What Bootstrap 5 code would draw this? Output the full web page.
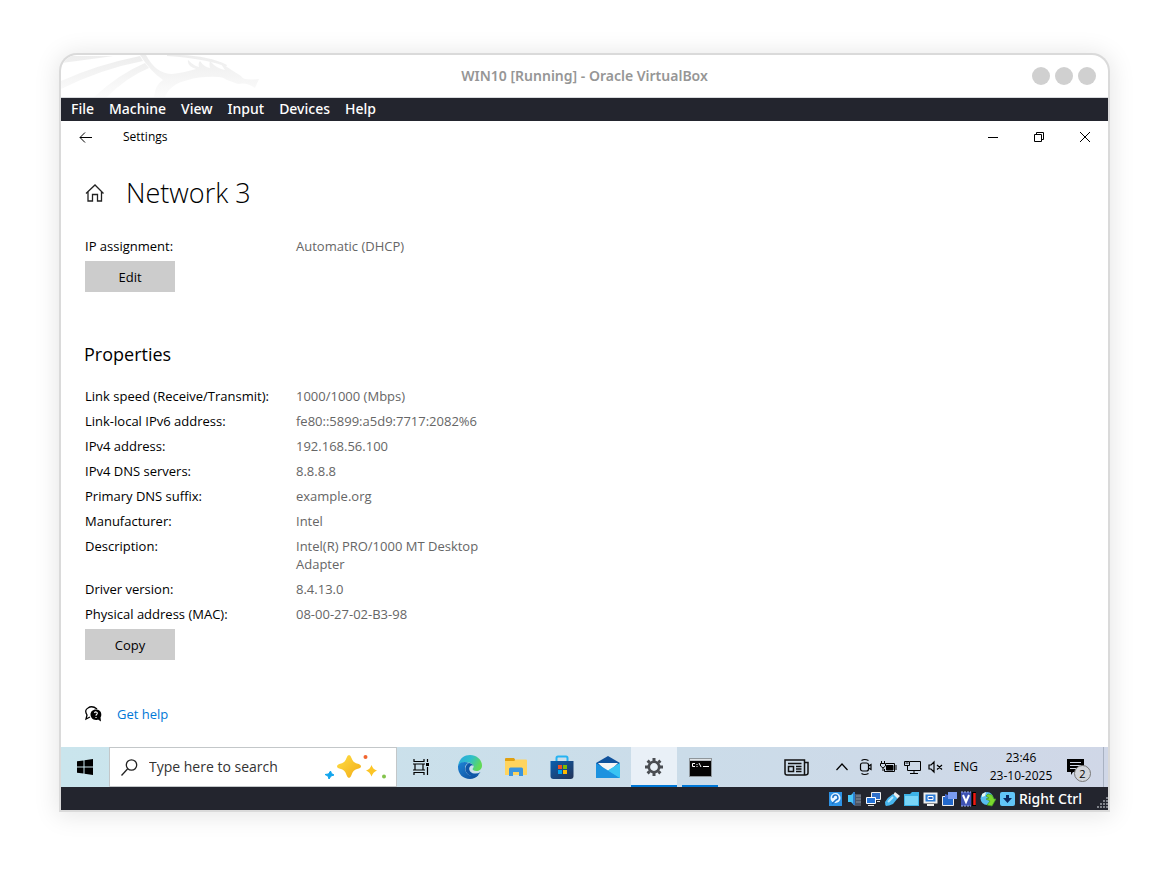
<!DOCTYPE html>
<html lang="en">
<head>
<meta charset="utf-8">
<meta name="viewport" content="width=device-width, initial-scale=1">
<title>WIN10 [Running] - Oracle VirtualBox</title>
<link href="https://cdn.jsdelivr.net/npm/bootstrap@5.3.0/dist/css/bootstrap.min.css" rel="stylesheet">
<style>
  body { background: #fff; color: #000; font: 13px/18px "Open Sans", "Noto Sans", sans-serif; padding: 55px 61px 64px; }
  svg { display: block; flex: none; }
  button { border: 0; background: none; padding: 0; color: inherit; }
  .vm { border-radius: 16px 16px 0 0; box-shadow: 0 0 0 2px #dadada, 0 2px 24px 4px rgba(0,0,0,.1); }
  .vm-title { height: 43px; border-bottom: 1px solid #d8dadd; border-radius: 16px 16px 0 0; overflow: hidden;
    display: grid; grid-template-columns: 1fr auto 1fr; align-items: center; font: 600 14px/20px "Noto Sans", sans-serif; color: #969696; }
  .dots { gap: 5px; padding-right: 12px; }
  .dot { width: 18px; height: 18px; border-radius: 50%; background: #d0d0d0; }
  .vm-bar { background: #23252e; color: #fff; height: 23px; font: 500 14px/22px "Noto Sans", sans-serif; }
  .vm-menu { gap: 15px; padding-left: 10px; }
  .vm-menu a { color: #fff; text-decoration: none; }
  .vm-status { gap: 4px; }
  .key { padding-right: 10px; line-height: 24px; }
  .app-bar { height: 32px; font-size: 12px; line-height: 20px; }
  .win-btn { width: 46px; height: 32px; display: flex; align-items: center; justify-content: center; }
  .back-btn { width: 48px; height: 32px; display: flex; align-items: center; justify-content: center; margin-right: 14px; }
  .page-area { padding: 20px 24px 23px; }
  .page-title { font: 300 27px/38px "Open Sans", sans-serif; margin: 0; }
  .page-head { height: 40px; gap: 22px; }
  .sub-title { font: 400 18px/28px "Open Sans", sans-serif; margin: 48px 0 19px -1px; }
  .props { display: grid; gap: 7px; margin-bottom: 6px; }
  .prop { display: grid; grid-template-columns: 211px 200px; }
  .prop dt { font-weight: 400; }
  .prop dd { margin: 0; color: #666; }
  .btn-flat { width: 90px; height: 31px; background: #ccc; border-radius: 0; display: block; }
  .help { color: #0078d7; text-decoration: none; }
  .help-row { margin-top: 44px; gap: 15px; height: 20px; }
  .task { height: 40px; background: linear-gradient(90deg, #cae5ed, #cbdce9 60%, #d0d7e7); }
  .start-btn { width: 48px; display: flex; align-items: center; justify-content: center; }
  .search { width: 288px; border: 1px solid #c3c7c9; background: #fff; padding: 0 9px 0 11px; }
  .search input { border: 0; outline: 0; width: 150px; font-size: 14px; background: none; padding: 0; margin-left: 11px; }
  .search input::placeholder { color: #333; opacity: 1; }
  .t-btn { width: 46px; height: 40px; display: flex; align-items: center; justify-content: center; }
  .t-view { margin: 0 3px 0 1px; }
  .t-active { background: #e9f0f7; box-shadow: inset 0 -2px #0078d7; }
  .t-open { width: 36px; margin: 0 5px; box-shadow: inset 0 -2px #0078d7; }
  .tray { gap: 7px; font-size: 12px; }
  .clock { text-align: center; width: 64px; }
  .notes { width: 40px; height: 40px; position: relative; border-right: 1px solid #a9b2c2; margin-right: 4px; }
  .notes svg { margin: 1px 0 0 3px; }
  .count { position: absolute; left: 10px; top: 18px; width: 17px; height: 17px; border: 1px solid #777; border-radius: 50%; background: #d3d6dc; font-size: 11px; line-height: 15px; text-align: center; }
</style>
</head>
<body>
<main class="vm">
  <header class="vm-title">
    <svg width="200" height="42" viewBox="0 0 200 42" aria-hidden="true">
      <defs><linearGradient id="wing" x1="0" y1="0" x2="0" y2="42" gradientUnits="userSpaceOnUse"><stop stop-color="#ededed"/><stop offset="1" stop-color="#fcfcfc"/></linearGradient></defs>
      <g fill="url(#wing)">
        <path d="M0 1H52Q24 5 0 8Z M0 26Q35 10 79 1L82 6Q40 14 0 34Z M33 42Q58 19 84 8L88 13Q66 22 46 42Z"/>
        <path d="M79 0H85Q95 19 111 19Q122 18 135 14Q126 11 127 5Q133 11 138 12Q137 8 139 6Q143 12 149 13Q148 9 149 6Q156 14 164 15L160 9L166 12Q172 16 180 21Q182 26 198 24L194 33Q186 27 177 29L166 25Q162 22 158 22Q140 21 127 25Q109 29 104 42H93Q94 30 102 25Q90 17 79 0Z"/>
        <path d="M106 0Q145 -1 166 10L165 12Q148 4 106 1Z"/>
      </g>
    </svg>
    <span>WIN10 [Running] - Oracle VirtualBox</span>
    <div class="dots d-flex justify-content-end">
      <button class="dot" aria-label="Minimize VM"></button><button class="dot" aria-label="Maximize VM"></button><button class="dot" aria-label="Close VM"></button>
    </div>
  </header>
  <nav class="vm-bar vm-menu d-flex" aria-label="Menu">
    <a href="#">File</a><a href="#">Machine</a><a href="#">View</a><a href="#">Input</a><a href="#">Devices</a><a href="#">Help</a>
  </nav>

  <section class="bg-white">
    <div class="app-bar d-flex align-items-center">
      <button class="back-btn" aria-label="Back"><svg width="13" height="11" fill="none" stroke="#000"><path d="M13 5.500H1M6 .5L1 5.500L6 10.500"/></svg></button>
      <span class="me-auto">Settings</span>
      <button class="win-btn" aria-label="Minimize"><svg width="10" height="10" stroke="#000"><path d="M0 5.500H10"/></svg></button>
      <button class="win-btn" aria-label="Restore"><svg width="10" height="10" fill="none" stroke="#000"><path d="M.5 2.500H7.500V9.500H.5ZM2.500 2.500V.5H9.500V7.500H7.500"/></svg></button>
      <button class="win-btn" aria-label="Close"><svg width="10" height="10" stroke="#000"><path d="M0 0L10 10M10 0L0 10"/></svg></button>
    </div>

    <div class="page-area">
      <div class="page-head d-flex align-items-center mb-4">
        <svg width="19" height="18" fill="none" stroke="#222" stroke-width="1.300" viewBox="0 0 19 18"><path d="M1 9.500L10 1L18.500 9.500M3 8V17H7.500V10.500H12.500V17H16.500V8"/></svg>
        <h1 class="page-title">Network 3</h1>
      </div>
      <dl class="props"><div class="prop"><dt>IP assignment:</dt><dd>Automatic (DHCP)</dd></div></dl>
      <button class="btn-flat">Edit</button>

      <h2 class="sub-title">Properties</h2>
      <dl class="props">
        <div class="prop"><dt>Link speed (Receive/Transmit):</dt><dd>1000/1000 (Mbps)</dd></div>
        <div class="prop"><dt>Link-local IPv6 address:</dt><dd>fe80::5899:a5d9:7717:2082%6</dd></div>
        <div class="prop"><dt>IPv4 address:</dt><dd>192.168.56.100</dd></div>
        <div class="prop"><dt>IPv4 DNS servers:</dt><dd>8.8.8.8</dd></div>
        <div class="prop"><dt>Primary DNS suffix:</dt><dd>example.org</dd></div>
        <div class="prop"><dt>Manufacturer:</dt><dd>Intel</dd></div>
        <div class="prop"><dt>Description:</dt><dd>Intel(R) PRO/1000 MT Desktop Adapter</dd></div>
        <div class="prop"><dt>Driver version:</dt><dd>8.4.13.0</dd></div>
        <div class="prop"><dt>Physical address (MAC):</dt><dd>08-00-27-02-B3-98</dd></div>
      </dl>
      <button class="btn-flat">Copy</button>
      <div class="help-row d-flex align-items-center">
        <svg width="17" height="16" viewBox="0 0 17 16"><path d="M5 11L1 13L2 9Q-1 4 3 2Q7 -1 12 3" fill="none" stroke="#000" stroke-width="1.300"/><path d="M11 3.500C7.500 3.500 5.500 6 5.500 8.500S7.500 14 11 14Q12 14 13 13.500L16 15.500L15.500 11.500Q16.500 10 16.300 8C16 5 14 3.500 11 3.500Z"/><path d="M9.500 7Q10 5.800 11.200 6Q12.800 6.500 12 8Q11 8.500 11 9.700M11 11V12" fill="none" stroke="#fff" stroke-width="1.200"/></svg>
        <a class="help" href="#">Get help</a>
      </div>
    </div>
  </section>

  <footer>
    <div class="task d-flex">
      <button class="start-btn" aria-label="Start"><svg width="16" height="16"><path d="M0 2.300L6.500 1.400V7.500H0ZM7.500 1.200L16 0V7.500H7.500ZM0 8.500H6.500V14.600L0 13.700ZM7.500 8.500H16V16L7.500 14.800Z"/></svg></button>
      <label class="search d-flex align-items-center">
        <svg width="17" height="17" fill="none" stroke="#222" stroke-width="1.300"><circle cx="10.500" cy="6" r="5.200"/><path d="M6.500 10L.5 16.500"/></svg>
        <input type="text" placeholder="Type here to search" aria-label="Search">
        <svg class="ms-auto" width="62" height="26" viewBox="0 0 62 26">
          <defs><linearGradient id="gold" x1="0" y1="0" x2="1" y2="1"><stop stop-color="#ffdf45"/><stop offset="1" stop-color="#f2ab16"/></linearGradient></defs>
          <path d="M24 1Q25.500 1 26.500 4Q28 8.500 32 9.500Q36 10.500 36 12.500Q36 14 32 15Q28 16 26.500 21Q25.500 24 24 24Q22.500 24 21.500 21Q20 16 16 15Q12 14 12 12.500Q12 10.500 16 9.500Q20 8.500 21.500 4Q22.500 1 24 1Z" fill="url(#gold)"/>
          <path d="M46.500 11Q48 15.500 52 16.500Q48 18 46.500 22.500Q45 18 41 16.500Q45 15.500 46.500 11Z" fill="#fcc526"/>
          <path d="M5.500 17L6.500 19.500L9 21L6 22L4 25L3 22L0 20.500L3.500 20Z" fill="#12a5ed" stroke="#12a5ed" stroke-width="1" stroke-linejoin="round"/>
          <circle cx="40.500" cy="3" r="2" fill="#f1652f"/><circle cx="59" cy="22.500" r="2" fill="#83c34b"/>
        </svg>
      </label>
      <button class="t-btn t-view" aria-label="Task view"><svg width="17" height="16" viewBox="0 0 17 16" fill="none" stroke="#000" stroke-width="1.200"><path d="M1 0V2.500H11V0M1 16V13.500H11V16M2 5H10V11H2ZM0 5H12M0 11H12M14.500 0V3M14.500 8V16"/><path d="M13 4H16V7H13Z" fill="#000" stroke="none"/></svg></button>
      <button class="t-btn" aria-label="Edge"><svg width="24" height="24" viewBox="0 0 24 24">
        <defs><linearGradient id="eg" x1="0" y1="0" x2="1" y2=".4"><stop stop-color="#29a6e0"/><stop offset=".55" stop-color="#30bfc9"/><stop offset="1" stop-color="#61d957"/></linearGradient><linearGradient id="eb" x1="0" y1="0" x2="1" y2="1"><stop stop-color="#1d84d6"/><stop offset="1" stop-color="#0c4a97"/></linearGradient></defs>
        <path d="M0 11C1 4 6 0 12 0C19 0 24 5 24 10.500C24 14.500 21 16 18.500 16C15.500 16 14.500 14.700 14.500 14Q16 12.500 15.500 10.500C14 7 4 5 0 11Z" fill="url(#eg)"/>
        <path d="M0 11C2 6.500 7 6 11 8C7 9 6 13 8 17C10 21 15 22 21 19.500C18 23 15 24 12 24C5 24 0 19 0 12Z" fill="url(#eb)"/>
        <path d="M11 8Q15 9 15.500 11Q14 9.500 12 11.500C10 14 12 18 16 18.500Q20 19 22.500 17Q20 21 16 21.500C8 21.500 4 12 11 8Z" fill="#0f58a8"/></svg></button>
      <button class="t-btn" aria-label="File Explorer"><svg width="22" height="20" viewBox="0 0 22 20"><path d="M0 2Q0 1 1 1H9L11 4H0Z" fill="#e0a011"/><path d="M0 4H9L11 2.500H21Q22 2.500 22 3.500V18H0Z" fill="#ffd45e"/><path d="M4 19V12Q4 10.500 5.500 10.500H16.500Q18 10.500 18 12V19H14V15H8V19Z" fill="#3a95de"/></svg></button>
      <button class="t-btn" aria-label="Store"><svg width="24" height="24" viewBox="0 0 24 24"><defs><linearGradient id="st" x1="0" y1="0" x2="1" y2="1"><stop stop-color="#0a5fb0"/><stop offset="1" stop-color="#243357"/></linearGradient></defs><path d="M6.500 7V3Q6.500 1.500 8 1.500H16Q17.500 1.500 17.500 3V7" fill="none" stroke="#26b3f2" stroke-width="2"/><path d="M.5 6H23.500V21Q23.500 24 20.500 24H3.500Q.5 24 .5 21Z" fill="url(#st)"/><path d="M8 10H12V14H8Z" fill="#f25022"/><path d="M13 10H17V14H13Z" fill="#7fba00"/><path d="M8 15H12V19H8Z" fill="#00a4ef"/><path d="M13 15H17V19H13Z" fill="#ffb900"/></svg></button>
      <button class="t-btn" aria-label="Mail"><svg width="24" height="24" viewBox="0 0 24 24"><path d="M0 8L12 1L24 8V14H0Z" fill="#0f529c"/><path d="M2 8H22L12 18Z" fill="#f5f5f5"/><path d="M24 8V23H0Z" fill="#32bdf1"/><path d="M0 8L12 15.500L24 23H0Z" fill="#1c92df"/><path d="M12 15.500L24 8V23Z" fill="#39c4f3"/></svg></button>
      <button class="t-btn t-active" aria-label="Settings"><svg width="18" height="18" viewBox="-9 -9 18 18"><circle r="5.200" fill="none" stroke="#4a4d52" stroke-width="2.600"/><g stroke="#4a4d52" stroke-width="3"><path d="M0 -6V-9M0 6V9M6 0H9M-6 0H-9M4.300 4.300L6.400 6.400M-4.300 4.300L-6.400 6.400M4.300 -4.300L6.400 -6.400M-4.300 -4.300L-6.400 -6.400"/></g></svg></button>
      <button class="t-btn t-open" aria-label="Command prompt"><svg width="23" height="19" viewBox="0 0 23 19"><path d="M0 0H23V19H0Z" fill="#8f969b"/><path d="M1 1H22V2.500H1Z" fill="#dfe3e6"/><path d="M1 3H22V18H1Z" fill="#050505"/><path d="M6 5.500H3.500V8.500H6M8 6V7M8 8V9M10 5L12 9M14 8.500H20" stroke="#fff" fill="none"/></svg></button>

      <div class="tray ms-auto d-flex align-items-center">
        <button class="me-3" aria-label="News"><svg width="25" height="17" fill="none" stroke="#111" stroke-width="1.500"><path d="M1 1H20.500V16H3Q1 16 1 14ZM20.500 3.500H24V14Q24 16 21 16M4 4.500H17.500M4.500 7.500H9.500V12.500H4.500ZM12 7.500H17.500M12 10H17.500M12 12.500H17.500"/></svg></button>
        <button class="ms-1" aria-label="Hidden icons"><svg width="12" height="8" fill="none" stroke="#000" stroke-width="1.200"><path d="M.5 7L6 1L11.500 7"/></svg></button>
        <button class="ms-1" aria-label="Meet now"><svg width="14" height="18" fill="none" stroke="#000" stroke-width="1.200"><rect x="1.500" y="5" width="8" height="8" rx="2"/><path d="M9.500 8L12 6.500V11.500L9.500 10M2.500 2.500Q5.500 .5 9.500 2.500M2.500 15.500Q5.500 17.500 9.500 15.500"/></svg></button>
        <button aria-label="Battery"><svg width="17" height="14" fill="none" stroke="#000"><path d="M6 3.500H14.500V11.500H4.500V9M16 5V10M1.500 1V3M4.500 1V3M.5 3.500H5.500V6L3 8L.5 6ZM3 8V11"/><path d="M6.500 5.500H13V10H6.500Z" fill="#000"/></svg></button>
        <button aria-label="Network"><svg width="17" height="14" fill="none" stroke="#000"><path d="M6 1.500H16.500V10.500H3.500V6M10 10.500V13.500M6 13.500H14M.5 1.500H5.500V5.500H.5Z"/><path d="M1.500 3H4.500"/></svg></button>
        <button aria-label="Volume"><svg width="15" height="14" fill="none" stroke="#000" stroke-width="1.200"><path d="M1 5H3L6 2V12L3 9H1ZM9 5L14 9.500M14 5L9 9.500"/></svg></button>
        <span class="ms-1">ENG</span>
        <time class="clock ms-1" datetime="2025-10-23T23:46">23:46<br>23-10-2025</time>
        <button class="notes ms-1" aria-label="Notifications"><svg width="17" height="17"><path d="M0 0H17V13H6L4 16V13H0Z"/><path d="M3 3.500H14M3 6.500H14M3 9.500H10" stroke="#d1d8e7"/></svg><span class="count">2</span></button>
      </div>
    </div>
    <div class="vm-bar vm-status d-flex align-items-center justify-content-end">
      <svg width="15" height="16" viewBox="0 0 15 16"><path d="M1 1H14V15H1Z" fill="#2d92e5"/><circle cx="7.500" cy="7" r="5" fill="#eaf6ff"/><path d="M5 7A2.500 2.500 0 1 1 8 9L4 13" fill="none" stroke="#1b70c6" stroke-width="1.500"/></svg>
      <svg width="15" height="16" viewBox="0 0 15 16"><path d="M8 3H14V15H7" fill="#4e5665"/><path d="M9 5H14M9 8H14M9 11H14" stroke="#8a919c"/><path d="M1 4H4L7 1V14L4 11H1Z" fill="#48c5f7"/><path d="M7 1V14" stroke="#2f7fce" stroke-width="2"/></svg>
      <svg width="15" height="16" viewBox="0 0 15 16"><path d="M5.500 1.500H14.500V8.500H5.500Z" fill="#2f6fc9" stroke="#eee"/><path d="M.5 6.500H9.500V12.500H.5Z" fill="#2473d8" stroke="#fff"/><path d="M2 14.500H8M11 10.500H14" stroke="#ddd"/></svg>
      <svg width="15" height="16" viewBox="0 0 15 16"><path d="M10 1L15 5L12 8L8 4Z" fill="#eee"/><path d="M8 3L12.500 7.500L8 13Q4 15 1 15Q0 14 0 11Q3 6 8 3Z" fill="#48b6ef"/><path d="M3 11L8 6" stroke="#b5e8ff" stroke-width="2"/></svg>
      <svg width="15" height="16" viewBox="0 0 15 16"><path d="M0 3H6L8 1H15V15H0Z" fill="#3db2e6"/><path d="M1 5H14V14H1Z" fill="#79d5f8"/></svg>
      <svg width="15" height="16" viewBox="0 0 15 16"><path d="M.5 1.500H14.500V12.500H.5Z" fill="#eee"/><path d="M2.500 3.500H12.500V10.500H2.500Z" fill="#2a7bd7"/><path d="M5 5.500H10V8.500H5Z" fill="#2a65c4" stroke="#fff"/><path d="M4 14H11" stroke="#eee" stroke-width="2"/></svg>
      <svg width="15" height="16" viewBox="0 0 15 16"><path d="M.5 5.500H11.500V14.500H.5Z" fill="#2369cc" stroke="#eee"/><path d="M6 1H15V8H6Z" fill="#7b9cf0"/><path d="M3 3L6 4V6L3 8Z" fill="#446ad3"/></svg>
      <svg width="15" height="16" viewBox="0 0 15 16"><path d="M0 1H10V15H0Z" fill="#3e52b3"/><path d="M2 4L5 11L8 4" fill="none" stroke="#fff" stroke-width="2"/><path d="M0 1H10M0 15H10" stroke="#9dafed" stroke-dasharray="2 1"/><path d="M11 1H15V15H11Z" fill="#000"/><path d="M13.500 2V14" stroke="#f21a12" stroke-width="2.500"/></svg>
      <svg width="16" height="16" viewBox="0 0 16 16"><circle cx="7" cy="7.500" r="6.500" fill="#58bdf0"/><path d="M2 3L6 1L5 5L2 6Z" fill="#e6fbf0"/><path d="M8 3L12 4L14 8H16L12 15L7 14L10 10L6 8L9 7L6 5Z" fill="#7bd62f" stroke="#3e9c25" stroke-width=".7"/></svg>
      <svg width="15" height="16" viewBox="0 0 15 16"><rect x="0" y="1" width="15" height="14" rx="2" fill="#62c5f7"/><path d="M6 4H9V7H12L7.500 12L3 7H6Z" fill="#0b2960"/></svg>
      <span class="key">Right Ctrl</span>
      <svg class="align-self-end" width="12" height="13"><path d="M10 1H12M7 4H12M4 7H12M1 10H12" stroke="#81848b" stroke-width="2" stroke-dasharray="2 1"/></svg>
    </div>
  </footer>
</main>
<script src="https://cdn.jsdelivr.net/npm/bootstrap@5.3.0/dist/js/bootstrap.bundle.min.js"></script>
</body>
</html>
